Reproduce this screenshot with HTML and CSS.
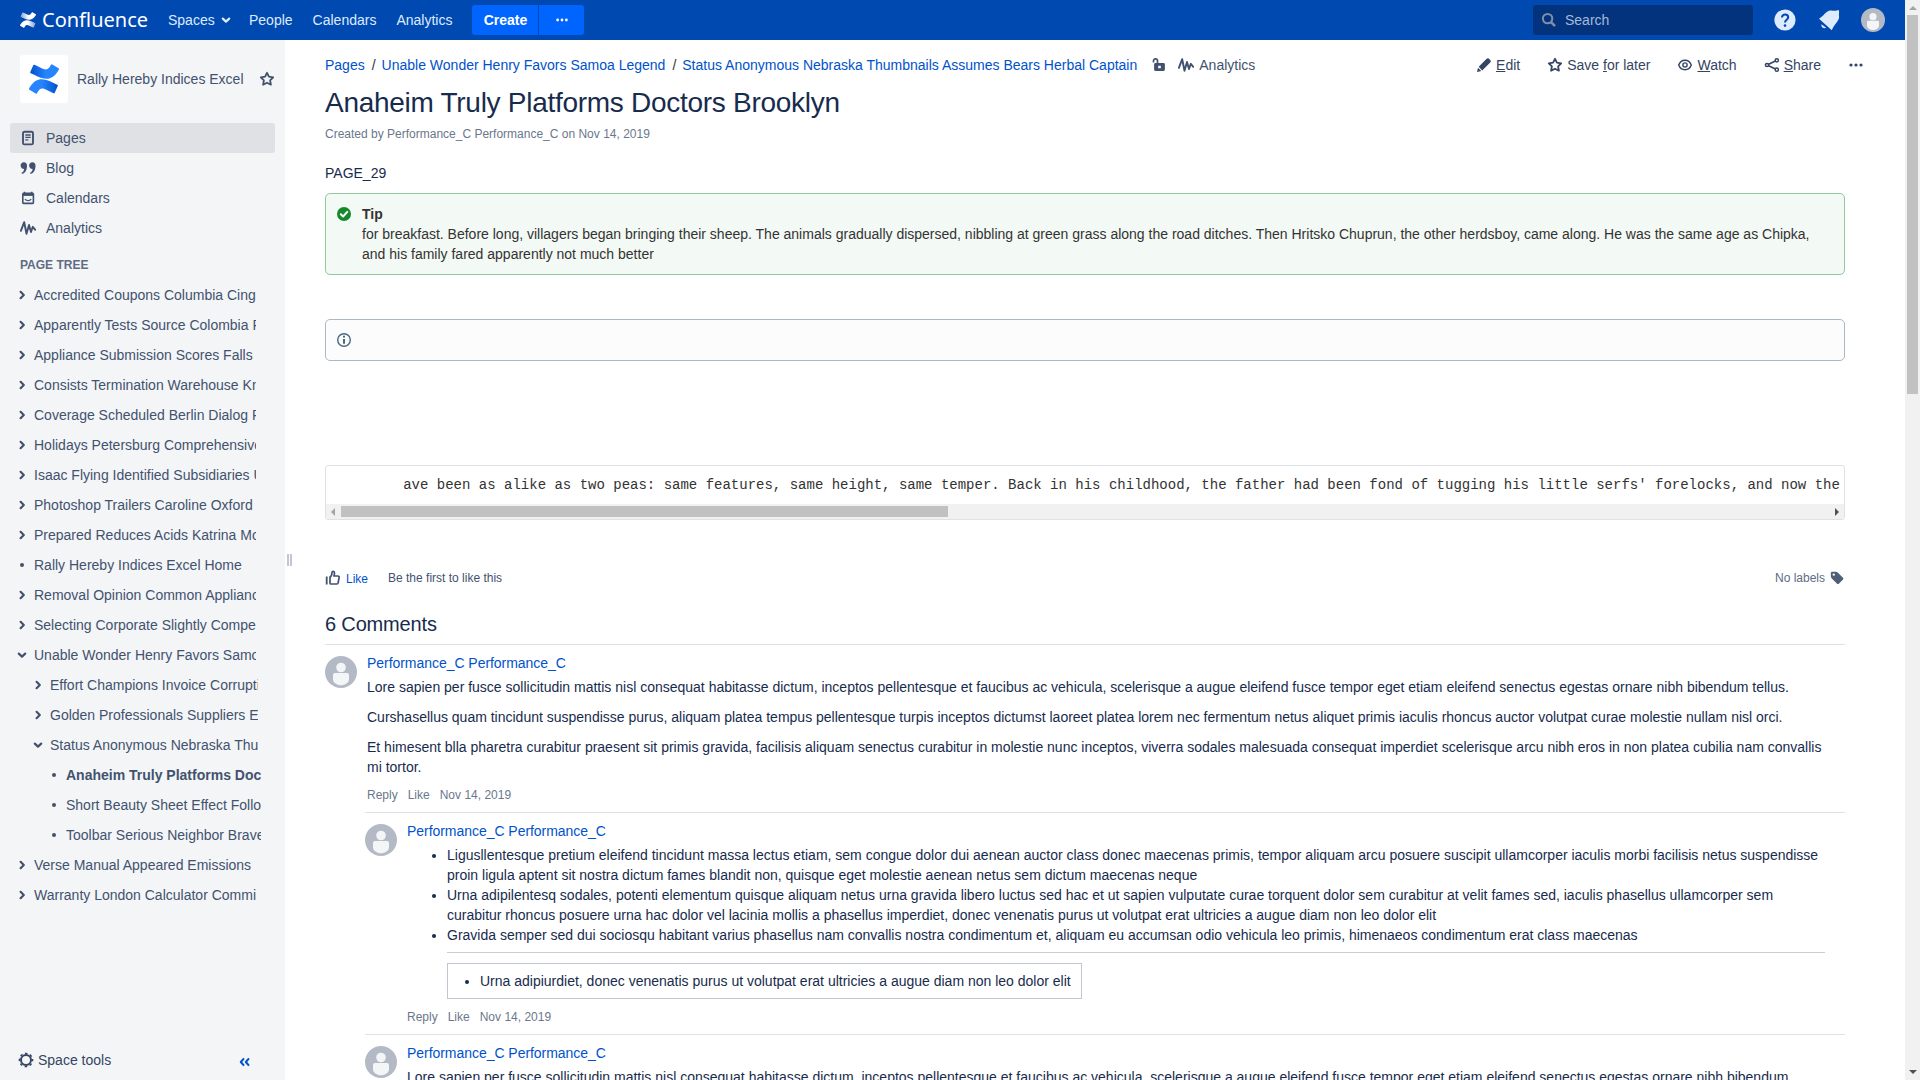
FILE: index.html
```html
<!DOCTYPE html>
<html lang="en">
<head>
<meta charset="utf-8">
<title>Anaheim Truly Platforms Doctors Brooklyn - Confluence</title>
<link rel="stylesheet" href="styles.css">
</head>
<body>
<svg class="defs" width="0" height="0">
  <defs>
    <linearGradient id="blue-top" x1="0" y1="0" x2="1" y2="0"><stop offset="0" stop-color="#0052cc"/><stop offset=".55" stop-color="#2684ff"/><stop offset="1" stop-color="#2684ff"/></linearGradient>
    <linearGradient id="blue-bottom" x1="1" y1="0" x2="0" y2="0"><stop offset="0" stop-color="#0052cc"/><stop offset=".55" stop-color="#2684ff"/><stop offset="1" stop-color="#2684ff"/></linearGradient>
    <linearGradient id="white-top" x1="0" y1="0" x2="1" y2="0"><stop offset="0" stop-color="#fff" stop-opacity=".5"/><stop offset=".5" stop-color="#fff"/></linearGradient>
    <linearGradient id="white-bottom" x1="1" y1="0" x2="0" y2="0"><stop offset="0" stop-color="#fff" stop-opacity=".5"/><stop offset=".5" stop-color="#fff"/></linearGradient>
    <path id="mark-bottom" d="M.87 18.257c-.248.382-.53.875-.763 1.245a.764.764 0 0 0 .255 1.04l4.965 3.054a.764.764 0 0 0 1.058-.26c.199-.332.454-.763.733-1.221 1.967-3.247 3.945-2.853 7.508-1.146l4.957 2.337a.764.764 0 0 0 1.028-.382l2.364-5.346a.764.764 0 0 0-.382-1 599.851 599.851 0 0 1-4.965-2.361C10.911 10.97 5.224 11.185.87 18.257z"/>
    <path id="mark-top" d="M23.131 5.743c.249-.405.531-.875.764-1.25a.764.764 0 0 0-.256-1.034L18.675.404a.764.764 0 0 0-1.058.26c-.195.335-.451.763-.734 1.225-1.966 3.246-3.945 2.85-7.508 1.146L4.437.694a.764.764 0 0 0-1.027.382L1.046 6.422a.764.764 0 0 0 .382 1c1.039.49 3.105 1.467 4.965 2.361 6.698 3.246 12.392 3.029 16.738-4.04z"/>
  </defs>
  <symbol id="i-star" viewBox="0 0 16 16"><path d="M8 1.8l1.9 3.9 4.3.6-3.1 3 .8 4.4L8 11.7l-3.9 2 .8-4.4-3.1-3 4.3-.6z" fill="none" stroke="currentColor" stroke-width="1.8" stroke-linejoin="round"/></symbol>
  <symbol id="i-analytics" viewBox="0 0 16 16"><path d="M.9 10.8L4.2 2.2l2.3 11.5L9 5l2 7 1.8-5.2 2.5 3" fill="none" stroke="currentColor" stroke-width="1.9" stroke-linejoin="round" stroke-linecap="round"/></symbol>
  <symbol id="i-right" viewBox="0 0 10 10"><path d="M3.600 1.800L6.800 5 3.600 8.200" fill="none" stroke="currentColor" stroke-width="2.200" stroke-linecap="round" stroke-linejoin="round"/></symbol>
  <symbol id="i-down" viewBox="0 0 10 10"><path d="M1.8 3.6L5 6.6l3.2-3" fill="none" stroke="currentColor" stroke-width="2.200" stroke-linecap="round" stroke-linejoin="round"/></symbol>
  <symbol id="i-dot" viewBox="0 0 10 10"><circle cx="5" cy="5" r="2" fill="currentColor"/></symbol>
  <symbol id="i-more" viewBox="0 0 16 16"><circle cx="3" cy="8" r="1.6" fill="currentColor"/><circle cx="8" cy="8" r="1.6" fill="currentColor"/><circle cx="13" cy="8" r="1.6" fill="currentColor"/></symbol>
  <symbol id="i-avatar" viewBox="0 0 32 32"><circle cx="16" cy="16" r="16" fill="#b3bac5"/><circle cx="16" cy="11.5" r="4.8" fill="#f4f5f7"/><path d="M8 18.8a1.8 1.8 0 0 1 1.8-1.8h12.4a1.8 1.8 0 0 1 1.8 1.8v4.4c0 3.6-4 6-8 6s-8-2.400-8-6z" fill="#f4f5f7"/></symbol>
</svg>

<div class="viewport">
  <div class="site">
    <header class="topbar">
      <a class="logo"><svg width="16" height="16" viewBox="0 0 24 24"><use href="#mark-top" fill="url(#white-top)"/><use href="#mark-bottom" fill="url(#white-bottom)"/></svg><span class="logo-text">Confluence</span></a>
      <nav class="topnav">
        <a class="with-chevron">Spaces<svg width="10" height="10"><use href="#i-down"/></svg></a>
        <a>People</a><a>Calendars</a><a>Analytics</a>
      </nav>
      <div class="create-group"><button class="create">Create</button><button class="create-more"><svg width="14" height="14"><use href="#i-more"/></svg></button></div>
      <div class="search"><svg width="16" height="16" viewBox="0 0 16 16"><circle cx="6.600" cy="6.600" r="4.700" fill="none" stroke="#7f8fa9" stroke-width="2"/><path d="M10.300 10.300l3 3" stroke="#7f8fa9" stroke-width="2.600" stroke-linecap="round"/></svg><span>Search</span></div>
      <div class="top-icons">
        <svg width="24" height="24" viewBox="0 0 24 24"><circle cx="12" cy="12" r="10.600" fill="#deebff"/><path d="M9 9.500c0-4 6.200-3.800 6.200-.2 0 2.300-3.200 2.600-3.200 5.300" fill="none" stroke="#0049b0" stroke-width="2.100"/><circle cx="12" cy="17.600" r="1.300" fill="#0049b0"/></svg>
        <svg width="24" height="24" viewBox="0 0 24 24"><path d="M2 10.800C7 7.500 9 2.800 13.500 2.400c3-.2 4.500 1 8.300-.4.700 2.500-.2 4.500.3 7 .2 3.500-4.300 6.500-7.300 13.200z" fill="#deebff"/><path d="M4.500 16.200l4.700 3.600c-3.500 1.200-5.300-1-4.700-3.600z" fill="#deebff"/></svg>
        <svg width="24" height="24"><use href="#i-avatar"/></svg>
      </div>
    </header>

    <div class="body">
      <aside class="sidebar">
        <div class="space-head">
          <div class="space-logo"><svg width="30" height="30" viewBox="0 0 24 24"><use href="#mark-top" fill="url(#blue-top)"/><use href="#mark-bottom" fill="url(#blue-bottom)"/></svg></div>
          <span class="space-name">Rally Hereby Indices Excel</span>
          <svg width="16" height="16"><use href="#i-star"/></svg>
        </div>
        <nav class="space-nav">
          <a class="active"><svg width="16" height="16" viewBox="0 0 16 16"><rect x="3" y="1.800" width="10" height="12.600" rx="1.500" fill="none" stroke="currentColor" stroke-width="1.900"/><path d="M5.300 5h5.400M5.300 7.400h5.400M5.300 9.800h3" stroke="currentColor" stroke-width="1.300"/></svg>Pages</a>
          <a><svg width="16" height="16" viewBox="0 0 16 16"><path d="M7 5.500c0 4.500-1.500 7.500-5 8.500l-.5-1.200c1.700-.8 2.500-2.300 2.600-3.900C2 8.900.6 7.500.6 5.500.6 3.500 2 2.200 3.900 2.200 5.900 2.200 7 3.600 7 5.500zM15.500 5.500c0 4.500-1.500 7.500-5 8.500l-.5-1.200c1.700-.8 2.500-2.300 2.600-3.900-2.100 0-3.500-1.400-3.500-3.400 0-2 1.400-3.300 3.300-3.300 2 0 3.100 1.400 3.100 3.300z" fill="currentColor"/></svg>Blog</a>
          <a><svg width="16" height="16" viewBox="0 0 16 16"><rect x="2.800" y="3.400" width="10.600" height="10" rx=".8" fill="none" stroke="currentColor" stroke-width="1.600"/><path d="M2.500 4.800h11" stroke="currentColor" stroke-width="2.200"/><path d="M4.500 1.800v2M11.700 1.800v2" stroke="currentColor" stroke-width="1.600"/><path d="M5 9.200c1.500 2 4.700 2 6.200 0" fill="none" stroke="currentColor" stroke-width="1.300"/></svg>Calendars</a>
          <a><svg width="16" height="16"><use href="#i-analytics"/></svg>Analytics</a>
        </nav>
        <h5 class="tree-title">PAGE TREE</h5>
        <ul class="tree">
          <li><svg><use href="#i-right"/></svg><span>Accredited Coupons Columbia Cingular</span></li>
          <li><svg><use href="#i-right"/></svg><span>Apparently Tests Source Colombia Pages</span></li>
          <li><svg><use href="#i-right"/></svg><span>Appliance Submission Scores Falls</span></li>
          <li><svg><use href="#i-right"/></svg><span>Consists Termination Warehouse Known</span></li>
          <li><svg><use href="#i-right"/></svg><span>Coverage Scheduled Berlin Dialog Paper</span></li>
          <li><svg><use href="#i-right"/></svg><span>Holidays Petersburg Comprehensive</span></li>
          <li><svg><use href="#i-right"/></svg><span>Isaac Flying Identified Subsidiaries Union</span></li>
          <li><svg><use href="#i-right"/></svg><span>Photoshop Trailers Caroline Oxford</span></li>
          <li><svg><use href="#i-right"/></svg><span>Prepared Reduces Acids Katrina Morning</span></li>
          <li><svg><use href="#i-dot"/></svg><span>Rally Hereby Indices Excel Home</span></li>
          <li><svg><use href="#i-right"/></svg><span>Removal Opinion Common Appliance</span></li>
          <li><svg><use href="#i-right"/></svg><span>Selecting Corporate Slightly Compe</span></li>
          <li><svg><use href="#i-down"/></svg><span>Unable Wonder Henry Favors Samoa Legend</span></li>
          <li class="level-2"><svg><use href="#i-right"/></svg><span>Effort Champions Invoice Corruption</span></li>
          <li class="level-2"><svg><use href="#i-right"/></svg><span>Golden Professionals Suppliers E</span></li>
          <li class="level-2"><svg><use href="#i-down"/></svg><span>Status Anonymous Nebraska Thumbnails</span></li>
          <li class="level-3 current"><svg><use href="#i-dot"/></svg><span>Anaheim Truly Platforms Doctors Brooklyn</span></li>
          <li class="level-3"><svg><use href="#i-dot"/></svg><span>Short Beauty Sheet Effect Follo</span></li>
          <li class="level-3"><svg><use href="#i-dot"/></svg><span>Toolbar Serious Neighbor Brave</span></li>
          <li><svg><use href="#i-right"/></svg><span>Verse Manual Appeared Emissions</span></li>
          <li><svg><use href="#i-right"/></svg><span>Warranty London Calculator Commi</span></li>
        </ul>
        <div class="space-tools">
          <svg width="16" height="16" viewBox="0 0 16 16"><circle cx="8" cy="8" r="5" fill="none" stroke="currentColor" stroke-width="2"/><circle cx="8" cy="8" r="6.600" fill="none" stroke="currentColor" stroke-width="1.400" stroke-dasharray="2.592 2.592" stroke-dashoffset="1.300"/></svg>
          <span>Space tools</span>
          <svg class="collapse" width="12" height="12" viewBox="0 0 12 12"><path d="M5 2.300L1.800 6 5 9.700M10 2.300L6.800 6 10 9.700" fill="none" stroke="#0052cc" stroke-width="2" stroke-linejoin="round"/></svg>
        </div>
      </aside>
      <div class="splitter"><i></i><i></i></div>

      <main class="content">
        <div class="page-bar">
          <div class="crumbs"><a>Pages</a><i>/</i><a>Unable Wonder Henry Favors Samoa Legend</a><i>/</i><a>Status Anonymous Nebraska Thumbnails Assumes Bears Herbal Captain</a></div>
          <svg class="lock" width="16" height="16" viewBox="0 0 16 16"><path d="M2.500 5.500V4a2 2 0 0 1 4-.2V7" fill="none" stroke="currentColor" stroke-width="1.700"/><path d="M4.500 6h8a1.400 1.400 0 0 1 1.400 1.400v5.200a1.400 1.400 0 0 1-1.400 1.400h-8a1.400 1.400 0 0 1-1.400-1.400V7.400A1.400 1.400 0 0 1 4.500 6zm2.700 2.700v2.600h2.600V8.700z" fill="currentColor" fill-rule="evenodd"/></svg>
          <a class="page-analytics"><svg width="16" height="16"><use href="#i-analytics"/></svg>Analytics</a>
          <div class="actions">
            <a><svg width="16" height="16" viewBox="0 0 16 16"><path d="M1 15l1-4.300L5.300 14zM2.700 9.800l7.700-7.700c1-1 2-1 3.100.100l.500.500c1 1 1 2 0 3l-7.800 7.700z" fill="currentColor"/></svg><span><u>E</u>dit</span></a>
            <a><svg width="16" height="16"><use href="#i-star"/></svg><span>Save <u>f</u>or later</span></a>
            <a><svg width="16" height="16" viewBox="0 0 16 16"><path d="M1.700 8c2.400-6.300 10.200-6.300 12.600 0-2.400 6.300-10.200 6.300-12.600 0z" fill="none" stroke="currentColor" stroke-width="1.400"/><circle cx="8" cy="8" r="2.100" fill="none" stroke="currentColor" stroke-width="1.400"/></svg><span><u>W</u>atch</span></a>
            <a><svg width="16" height="16" viewBox="0 0 16 16"><path d="M12.500 3.500L3 8l9.500 4.500" fill="none" stroke="currentColor" stroke-width="1.600"/><g fill="#fff" stroke="currentColor" stroke-width="1.500"><circle cx="12.800" cy="3.300" r="1.600"/><circle cx="3" cy="8" r="1.600"/><circle cx="12.800" cy="12.700" r="1.600"/></g></svg><span><u>S</u>hare</span></a>
            <a><svg width="16" height="16"><use href="#i-more"/></svg></a>
          </div>
        </div>
        <h1>Anaheim Truly Platforms Doctors Brooklyn</h1>
        <p class="byline">Created by Performance_C Performance_C on Nov 14, 2019</p>
        <p class="page-id">PAGE_29</p>
        <section class="panel tip">
          <svg width="16" height="16" viewBox="0 0 16 16"><circle cx="8" cy="8" r="7" fill="#14892c"/><path d="M4.800 8.200l2.300 2.300 4.200-4.600" fill="none" stroke="#fff" stroke-width="2" stroke-linecap="round" stroke-linejoin="round"/></svg>
          <div><b>Tip</b><p>for breakfast. Before long, villagers began bringing their sheep. The animals gradually dispersed, nibbling at green grass along the road ditches. Then Hritsko Chuprun, the other herdsboy, came along. He was the same age as Chipka, and his family fared apparently not much better</p></div>
        </section>
        <section class="panel info">
          <svg width="16" height="16" viewBox="0 0 16 16"><circle cx="8" cy="8" r="6.300" fill="none" stroke="#4a6785" stroke-width="1.400"/><path d="M8 7v4.800" stroke="#4a6785" stroke-width="2"/><circle cx="8" cy="4.700" r="1.100" fill="#4a6785"/></svg>
        </section>
        <section class="code">
          <pre>        ave been as alike as two peas: same features, same height, same temper. Back in his childhood, the father had been fond of tugging his little serfs' forelocks, and now the</pre>
          <div class="hscroll"><b class="arrow-left"></b><b class="hthumb"></b><b class="arrow-right"></b></div>
        </section>
        <div class="likes">
          <svg width="16" height="16" viewBox="0 0 16 16"><path d="M1.700 6.500v8" stroke="currentColor" stroke-width="1.800"/><path d="M5 7c2-1 2-3 2-4.500C7 .800 9.500.900 9.500 3c0 1.300-.4 2.200-.6 3h4c1 0 1.400.7 1.200 1.600l-1 5.400c-.1.700-.7 1-1.300 1H6c-.6 0-1-.4-1-1z" fill="none" stroke="currentColor" stroke-width="1.700" stroke-linejoin="round"/></svg>
          <a>Like</a><span>Be the first to like this</span>
          <div class="labels">No labels<svg width="16" height="16" viewBox="0 0 16 16"><path d="M1.800 3.200c0-1 .6-1.500 1.500-1.500h3.500c.8 0 1.300.2 1.900.8l5 5c.8.800.8 1.500.1 2.200l-3.700 3.700c-.8.800-1.500.8-2.300 0l-5-5c-.6-.6-.9-1.100-.9-1.900zm2.900.2a1.200 1.200 0 1 0 .1 2.400 1.200 1.200 0 0 0-.1-2.400z" fill="currentColor"/></svg></div>
        </div>
        <h2>6 Comments</h2>
        <article class="comment">
          <svg class="avatar"><use href="#i-avatar"/></svg>
          <div class="comment-body">
            <a class="author">Performance_C Performance_C</a>
            <p>Lore sapien per fusce sollicitudin mattis nisl consequat habitasse dictum, inceptos pellentesque et faucibus ac vehicula, scelerisque a augue eleifend fusce tempor eget etiam eleifend senectus egestas ornare nibh bibendum tellus.</p>
            <p>Curshasellus quam tincidunt suspendisse purus, aliquam platea tempus pellentesque turpis inceptos dictumst laoreet platea lorem nec fermentum netus aliquet primis iaculis rhoncus auctor volutpat curae molestie nullam nisl orci.</p>
            <p>Et himesent blla pharetra curabitur praesent sit primis gravida, facilisis aliquam senectus curabitur in molestie nunc inceptos, viverra sodales malesuada consequat imperdiet scelerisque arcu nibh eros in non platea cubilia nam convallis mi tortor.</p>
            <div class="comment-actions"><span>Reply</span><span>Like</span><span>Nov 14, 2019</span></div>
          </div>
        </article>
        <article class="comment reply">
          <svg class="avatar"><use href="#i-avatar"/></svg>
          <div class="comment-body">
            <a class="author">Performance_C Performance_C</a>
            <ul>
              <li>Ligusllentesque pretium eleifend tincidunt massa lectus etiam, sem congue dolor dui aenean auctor class donec maecenas primis, tempor aliquam arcu posuere suscipit ullamcorper iaculis morbi facilisis netus suspendisse proin ligula aptent sit nostra dictum fames blandit non, quisque eget molestie aenean netus sem dictum maecenas neque</li>
              <li>Urna adipilentesq sodales, potenti elementum quisque aliquam netus urna gravida libero luctus sed hac et ut sapien vulputate curae torquent dolor sem curabitur at velit fames sed, iaculis phasellus ullamcorper sem curabitur rhoncus posuere urna hac dolor vel lacinia mollis a phasellus imperdiet, donec venenatis purus ut volutpat erat ultricies a augue diam non leo dolor elit</li>
              <li>Gravida semper sed dui sociosqu habitant varius phasellus nam convallis nostra condimentum et, aliquam eu accumsan odio vehicula leo primis, himenaeos condimentum erat class maecenas</li>
            </ul>
            <hr>
            <div class="boxed"><ul><li>Urna adipiurdiet, donec venenatis purus ut volutpat erat ultricies a augue diam non leo dolor elit</li></ul></div>
            <div class="comment-actions"><span>Reply</span><span>Like</span><span>Nov 14, 2019</span></div>
          </div>
        </article>
        <article class="comment reply">
          <svg class="avatar"><use href="#i-avatar"/></svg>
          <div class="comment-body">
            <a class="author">Performance_C Performance_C</a>
            <p>Lore sapien per fusce sollicitudin mattis nisl consequat habitasse dictum, inceptos pellentesque et faucibus ac vehicula, scelerisque a augue eleifend fusce tempor eget etiam eleifend senectus egestas ornare nibh bibendum</p>
          </div>
        </article>
      </main>
    </div>
  </div>
  <div class="vscroll"><b class="arrow-up"></b><b class="vthumb"></b><b class="arrow-down"></b></div>
</div>
</body>
</html>
```

FILE: styles.css
```css
* { box-sizing: border-box; }
html, body { margin: 0; height: 100%; overflow: hidden; }
body {
  font: 14px/20px "Liberation Sans", Arial, sans-serif;
  color: #172b4d;
  background: #fff;
}
h1, h2, h5, p, ul, pre { margin: 0; padding: 0; font-weight: normal; }
svg { flex: none; display: block; }
button { border: 0; padding: 0; font: inherit; color: inherit; }
.defs { position: absolute; }

.viewport { display: flex; height: 1080px; overflow: hidden; }
.site { flex: 1; min-width: 0; display: flex; flex-direction: column; }

/* Top bar */
.topbar {
  flex: none; height: 40px; padding: 0 20px;
  display: flex; align-items: center;
  background: #0049b0; color: #deebff;
}
.logo { display: flex; align-items: center; gap: 6px; width: 148px; }
.logo-text { font: 20px/24px "Noto Sans", sans-serif; color: #fff; }
.topnav { display: flex; gap: 20px; }
.with-chevron { display: flex; align-items: center; gap: 6px; width: 61px; }
.create-group { display: flex; gap: 1px; margin-left: 20px; color: #fff; }
.create, .create-more { height: 30px; background: #0065ff; }
.create { width: 66px; font-weight: bold; border-radius: 3px 0 0 3px; }
.create-more { width: 45px; display: flex; align-items: center; justify-content: center; border-radius: 0 3px 3px 0; }
.search {
  margin-left: auto; width: 220px; height: 30px; padding-left: 8px;
  display: flex; align-items: center; gap: 8px;
  background: #03337c; border-radius: 3px; color: #a5b9da;
}
.top-icons { display: flex; gap: 20px; margin-left: 20px; }

.body { flex: 1; min-height: 0; display: flex; }

/* Sidebar */
.sidebar {
  flex: none; width: 285px; padding: 15px 10px 10px;
  display: flex; flex-direction: column;
  background: #f4f5f7; color: #42526e;
}
.space-head { display: flex; align-items: center; height: 48px; padding-left: 10px; }
.space-logo { width: 48px; height: 48px; display: flex; align-items: center; justify-content: center; background: #fff; border-radius: 3px; }
.space-name { width: 173px; margin-left: 9px; margin-right: 9px; white-space: nowrap; }
.space-nav { margin-top: 20px; }
.space-nav a { display: flex; align-items: center; gap: 10px; height: 30px; padding-left: 10px; border-radius: 3px; }
.space-nav .active { background: #dfe1e5; }
.tree-title { margin: 12px 0 5px 10px; font: bold 12px/20px "Liberation Sans", Arial, sans-serif; color: #5e6c84; }
.tree { list-style: none; width: 246px; padding-left: 7px; }
.tree li { display: flex; align-items: center; height: 30px; gap: 7px; }
.tree li svg { width: 10px; height: 10px; }
.tree li span { flex: 1; overflow: hidden; white-space: nowrap; }
.tree .level-2 { margin-left: 16px; margin-right: -2px; }
.tree .level-3 { margin-left: 32px; margin-right: -5px; }
.tree .current { font-weight: bold; }
.space-tools { display: flex; align-items: center; gap: 4px; margin-top: auto; height: 20px; padding-left: 8px; color: #344563; }
.collapse { margin: 4px 24px 0 auto; }

.splitter { flex: none; width: 7px; padding-left: 2px; display: flex; align-items: center; gap: 1px; }
.splitter i { width: 2px; height: 12px; background: #c1c7d0; }

/* Page */
.content { flex: 1; min-width: 0; padding: 15px 60px 0 33px; overflow: hidden; }
a { color: inherit; text-decoration: none; }
.page-bar { display: flex; align-items: center; height: 20px; margin-right: -19px; white-space: nowrap; }
.crumbs { color: #0052cc; }
.crumbs i { font-style: normal; color: #333; padding: 0 6px 0 7px; }
.page-bar > svg, .page-analytics { color: #42526e; }
.lock { margin-left: 14px; }
.page-analytics { display: flex; align-items: center; gap: 5px; margin-left: 11px; }
.actions { display: flex; gap: 27px; margin-left: auto; color: #344563; }
.actions a { display: flex; align-items: center; gap: 4px; }
h1 { margin-top: 11px; font-size: 28px; line-height: 34px; letter-spacing: -.28px; }
.byline { margin-top: 4px; font-size: 12px; line-height: 20px; color: #6b778c; }
.page-id { margin-top: 19px; }
.panel { display: flex; gap: 10px; padding: 10px; border: 1px solid; border-radius: 5px; color: #333; }
.panel svg { margin-top: 2px; }
.tip { margin-top: 10px; height: 82px; background: #f3f9f4; border-color: #91c89c; }
.info { margin-top: 44px; height: 42px; background: #fcfcfc; border-color: #aab8c6; }
.code { margin-top: 104px; height: 55px; border: 1px solid #dfe1e5; border-radius: 3px; overflow: hidden; }
.code pre { height: 38px; padding: 9px 10px; font: 14px/20px "Liberation Mono", monospace; color: #333; overflow: hidden; }
.hscroll { height: 15px; display: flex; align-items: center; background: #f1f1f1; }
.hthumb { width: 607px; height: 11px; margin-left: 6px; background: #c1c1c1; }
.arrow-left, .arrow-right { border: solid transparent; border-width: 4px 0; }
.arrow-left { margin-left: 5px; border-right: 4px solid #a3a3a3; }
.arrow-right { margin: 0 5px 0 auto; border-left: 4px solid #505050; }
.likes { display: flex; align-items: center; height: 20px; margin-top: 48px; font-size: 12px; color: #42526e; }
.likes a { margin: 1px 20px 0 5px; color: #0052cc; }
.labels { display: flex; align-items: center; gap: 4px; margin-left: auto; color: #5e6c84; }
.labels svg { color: #505f79; }
h2 { margin-top: 24px; height: 32px; font-size: 20px; line-height: 24px; letter-spacing: -.16px; }

/* Comments */
.comment { display: flex; gap: 10px; padding: 11px 20px 7px 0; border-top: 1px solid #dfe1e5; }
.reply { margin-left: 40px; }
.avatar { width: 32px; height: 32px; }
.comment-body { flex: 1; min-width: 0; margin-top: -3px; }
.author { display: block; color: #0052cc; margin-bottom: 4px; letter-spacing: -.042px; }
.comment-body p + p { margin-top: 10px; }
.comment-actions { display: flex; gap: 10px; margin-top: 8px; font-size: 12px; color: #6b778c; }
.comment ul { padding-left: 40px; }
hr { height: 1px; margin: 7px 0 10px 40px; border: 0; background: #ccc; }
.boxed { width: 635px; height: 36px; margin-left: 40px; padding: 7px 10px; border: 1px solid #c1c7d0; }
.boxed ul { padding-left: 22px; white-space: nowrap; }

/* Window scrollbar */
.vscroll { flex: none; width: 15px; display: flex; flex-direction: column; align-items: center; background: #f1f1f1; }
.vthumb { width: 11px; height: 379px; margin-top: 5px; background: #c1c1c1; }
.arrow-up, .arrow-down { border: solid transparent; border-width: 0 4px; }
.arrow-up { margin-top: 6px; border-bottom: 4px solid #a3a3a3; }
.arrow-down { margin: auto 0 6px; border-top: 4px solid #505050; }
```
